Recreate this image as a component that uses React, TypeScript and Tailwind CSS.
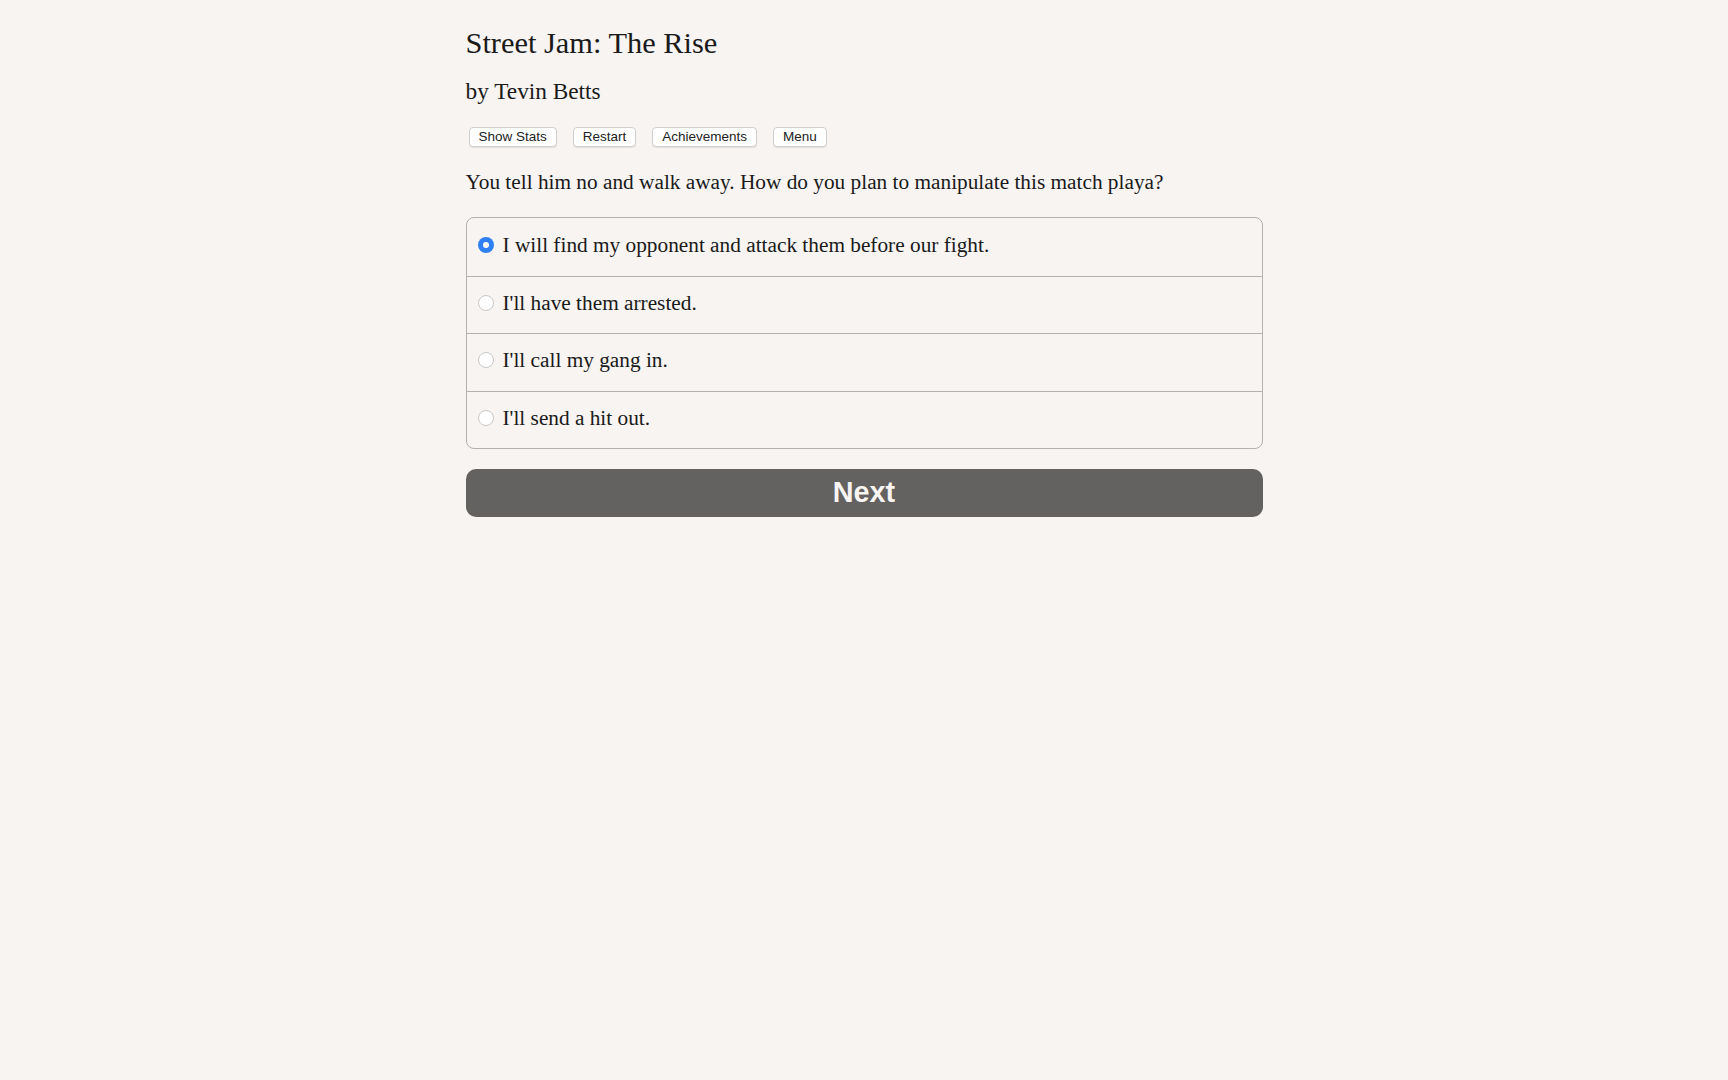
import { useState } from 'react';

const options = [
  "I will find my opponent and attack them before our fight.",
  "I'll have them arrested.",
  "I'll call my gang in.",
  "I'll send a hit out.",
];

const toolbar = ["Show Stats", "Restart", "Achievements", "Menu"];

export default function App() {
  const [choice, setChoice] = useState(0);

  return (
    <div className="min-h-screen bg-[#f7f4f1] text-[#1a1a1a] font-['Liberation_Serif',serif]">
      <div className="w-[797px] mx-auto pt-[25px]">
        {/* header */}
        <h1 className="text-[30.4px] leading-[36px]">Street Jam: The Rise</h1>
        <h2 className="mt-[15px] text-[23.3px] leading-[30px]">by Tevin Betts</h2>

        <div className="mt-[21px] ml-[3px] flex gap-[16px]">
          {toolbar.map((label) => (
            <button
              key={label}
              className="h-[20px] px-[9px] bg-white border border-[#d2d0ce] rounded-[4px] shadow-[0_1px_1px_rgba(0,0,0,0.08)] text-[13.5px] leading-none text-[#222] font-['Liberation_Sans',sans-serif]"
            >
              {label}
            </button>
          ))}
        </div>

        <p className="mt-[21px] text-[21.3px] leading-[28px]">
          You tell him no and walk away. How do you plan to manipulate this match playa?
        </p>

        {/* choices */}
        <div className="mt-[21px] border border-[#b3b2b0] rounded-[8px]">
          {options.map((opt, i) => (
            <label
              key={opt}
              onClick={() => setChoice(i)}
              className={`h-[57.5px] pl-[11px] pb-[4px] flex items-center gap-[9px] cursor-pointer ${i > 0 ? 'border-t border-[#b3b2b0]' : ''}`}
            >
              {choice === i ? (
                <span className="w-[16px] h-[16px] rounded-full bg-[#2f7ff5] flex items-center justify-center">
                  <span className="w-[6px] h-[6px] rounded-full bg-white" />
                </span>
              ) : (
                <span className="w-[16px] h-[16px] rounded-full bg-white border border-[#c9c8c6]" />
              )}
              <span className="text-[21.3px] leading-[28px]">{opt}</span>
            </label>
          ))}
        </div>

        <button className="mt-[20px] w-full h-[48px] rounded-[10px] bg-[#636260] text-[#f7f4f1] font-bold text-[28.8px] font-['Liberation_Sans',sans-serif]">
          Next
        </button>
      </div>
    </div>
  );
}
